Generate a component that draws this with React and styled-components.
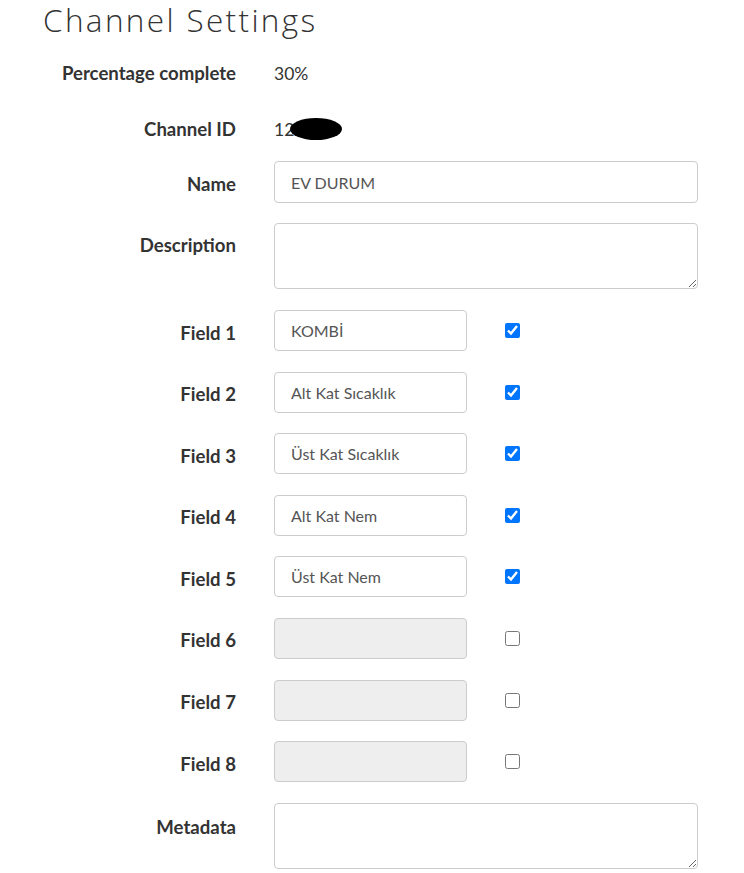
import React from 'react';
import styled, { createGlobalStyle } from 'styled-components';

const GlobalStyle = createGlobalStyle`
  body {
    margin: 0;
    background: #fff;
    font-family: Lato, "Open Sans", sans-serif;
    color: #333;
  }
`;

const Page = styled.div`
  padding: 0 46px 0 43px;
`;

const Title = styled.h1`
  margin: 0;
  padding-top: 1px;
  font-family: "Open Sans", sans-serif;
  font-weight: 300;
  font-size: 31.5px;
  line-height: 38px;
  letter-spacing: 2.35px;
  color: #333;
`;

const Form = styled.div`
  display: flex;
  flex-direction: column;
  margin-top: 16px;
`;

const Row = styled.div`
  display: grid;
  grid-template-columns: 193px 1fr;
  column-gap: 38px;
  align-items: ${p => (p.top ? 'start' : 'center')};
  min-height: ${p => p.height || 41}px;
  margin-bottom: ${p => (p.space === undefined ? 20.6 : p.space)}px;
`;

const Label = styled.label`
  text-align: right;
  font-weight: 700;
  font-size: 18.6px;
  line-height: 24px;
  color: #333;
  padding-top: ${p => p.offset || 0}px;
`;

const Value = styled.span`
  font-size: 17.5px;
  color: #333;
  display: flex;
  align-items: center;
`;

const Redact = styled.span`
  display: inline-block;
  width: 52px;
  height: 22px;
  border-radius: 50%;
  background: #000;
  margin-left: -4px;
`;

const TextInput = styled.input`
  box-sizing: border-box;
  width: ${p => p.width || '100%'};
  height: ${p => p.h || 42}px;
  padding: 0 16px;
  border: 1px solid #ccc;
  border-radius: 4px;
  background: ${p => (p.disabled ? '#eee' : '#fff')};
  font-family: Lato, sans-serif;
  font-size: 16px;
  color: #555;
  outline: none;
`;

const TextArea = styled.textarea`
  box-sizing: border-box;
  width: 100%;
  height: 66px;
  border: 1px solid #ccc;
  border-radius: 4px;
  display: block;
  font-family: Lato, sans-serif;
  font-size: 16px;
`;

const FieldWrap = styled.div`
  display: flex;
  align-items: center;
  gap: 38px;
`;

const Check = styled.input`
  width: 15px;
  height: 15px;
  margin: 0;
`;

const fields = [
  'KOMBİ',
  'Alt Kat Sıcaklık',
  'Üst Kat Sıcaklık',
  'Alt Kat Nem',
  'Üst Kat Nem',
  '',
  '',
  '',
];

export default function App() {
  return (
    <Page>
      <GlobalStyle />
      <Title>Channel Settings</Title>
      <Form>
        <Row height={36} space={20}>
          <Label>Percentage complete</Label>
          <Value>30%</Value>
        </Row>
        <Row height={36} space={14}>
          <Label>Channel ID</Label>
          <Value>12<Redact /></Value>
        </Row>
        <Row space={20}>
          <Label offset={4}>Name</Label>
          <TextInput defaultValue="EV DURUM" readOnly />
        </Row>
        <Row top height={66} space={21}>
          <Label offset={10}>Description</Label>
          <TextArea />
        </Row>
        {fields.map((f, i) => (
          <Row key={i}>
            <Label offset={4}>Field {i + 1}</Label>
            <FieldWrap>
              <TextInput width="193px" h={41} defaultValue={f} disabled={!f} readOnly />
              <Check type="checkbox" defaultChecked={!!f} />
            </FieldWrap>
          </Row>
        ))}
        <Row top height={66} space={0}>
          <Label offset={12}>Metadata</Label>
          <TextArea />
        </Row>
      </Form>
    </Page>
  );
}
